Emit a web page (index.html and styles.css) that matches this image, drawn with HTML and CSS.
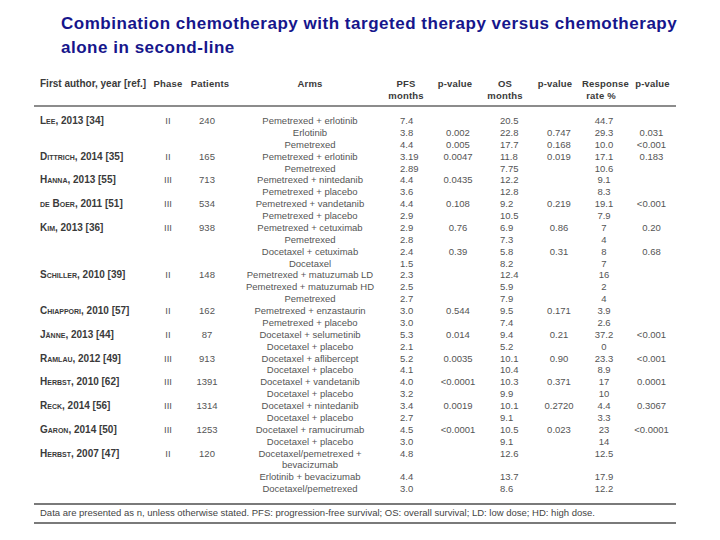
FILE: index.html
```html
<!DOCTYPE html>
<html lang="en">
<head>
<meta charset="utf-8">
<title>Combination chemotherapy with targeted therapy versus chemotherapy alone in second-line</title>
<link rel="stylesheet" href="styles.css">
</head>
<body>
<h1 class="title">Combination chemotherapy with targeted therapy versus chemotherapy<br>alone in second-line</h1>
<table class="trials">
  <colgroup>
    <col class="c-author"><col class="c-phase"><col class="c-pat"><col class="c-arms"><col class="c-pfs"><col class="c-p1"><col class="c-os"><col class="c-p2"><col class="c-rr"><col class="c-p3">
  </colgroup>
  <thead>
    <tr>
      <th class="author">First author, year [ref.]</th>
      <th>Phase</th>
      <th>Patients</th>
      <th>Arms</th>
      <th>PFS<br>months</th>
      <th>p-value</th>
      <th>OS<br>months</th>
      <th>p-value</th>
      <th class="rr-h">Response<br>rate %</th>
      <th class="p3-h">p-value</th>
    </tr>
  </thead>
  <tbody>
    <tr class="first"><td class="author"><span class="sc">Lee</span>, 2013 [34]</td><td class="ph">II</td><td class="pt">240</td><td class="arm">Pemetrexed + erlotinib</td><td class="pfs">7.4</td><td class="pv"></td><td class="os">20.5</td><td class="pv2"></td><td class="rr">44.7</td><td class="pv3"></td></tr>
    <tr><td></td><td></td><td></td><td class="arm">Erlotinib</td><td class="pfs">3.8</td><td class="pv">0.002</td><td class="os">22.8</td><td class="pv2">0.747</td><td class="rr">29.3</td><td class="pv3">0.031</td></tr>
    <tr><td></td><td></td><td></td><td class="arm">Pemetrexed</td><td class="pfs">4.4</td><td class="pv">0.005</td><td class="os">17.7</td><td class="pv2">0.168</td><td class="rr">10.0</td><td class="pv3">&lt;0.001</td></tr>
    <tr><td class="author"><span class="sc">Dittrich</span>, 2014 [35]</td><td class="ph">II</td><td class="pt">165</td><td class="arm">Pemetrexed + erlotinib</td><td class="pfs">3.19</td><td class="pv">0.0047</td><td class="os">11.8</td><td class="pv2">0.019</td><td class="rr">17.1</td><td class="pv3">0.183</td></tr>
    <tr><td></td><td></td><td></td><td class="arm">Pemetrexed</td><td class="pfs">2.89</td><td class="pv"></td><td class="os">7.75</td><td class="pv2"></td><td class="rr">10.6</td><td class="pv3"></td></tr>
    <tr><td class="author"><span class="sc">Hanna</span>, 2013 [55]</td><td class="ph">III</td><td class="pt">713</td><td class="arm">Pemetrexed + nintedanib</td><td class="pfs">4.4</td><td class="pv">0.0435</td><td class="os">12.2</td><td class="pv2"></td><td class="rr">9.1</td><td class="pv3"></td></tr>
    <tr><td></td><td></td><td></td><td class="arm">Pemetrexed + placebo</td><td class="pfs">3.6</td><td class="pv"></td><td class="os">12.8</td><td class="pv2"></td><td class="rr">8.3</td><td class="pv3"></td></tr>
    <tr><td class="author"><span class="sc">de Boer</span>, 2011 [51]</td><td class="ph">III</td><td class="pt">534</td><td class="arm">Pemetrexed + vandetanib</td><td class="pfs">4.4</td><td class="pv">0.108</td><td class="os">9.2</td><td class="pv2">0.219</td><td class="rr">19.1</td><td class="pv3">&lt;0.001</td></tr>
    <tr><td></td><td></td><td></td><td class="arm">Pemetrexed + placebo</td><td class="pfs">2.9</td><td class="pv"></td><td class="os">10.5</td><td class="pv2"></td><td class="rr">7.9</td><td class="pv3"></td></tr>
    <tr><td class="author"><span class="sc">Kim</span>, 2013 [36]</td><td class="ph">III</td><td class="pt">938</td><td class="arm">Pemetrexed + cetuximab</td><td class="pfs">2.9</td><td class="pv">0.76</td><td class="os">6.9</td><td class="pv2">0.86</td><td class="rr">7</td><td class="pv3">0.20</td></tr>
    <tr><td></td><td></td><td></td><td class="arm">Pemetrexed</td><td class="pfs">2.8</td><td class="pv"></td><td class="os">7.3</td><td class="pv2"></td><td class="rr">4</td><td class="pv3"></td></tr>
    <tr><td></td><td></td><td></td><td class="arm">Docetaxel + cetuximab</td><td class="pfs">2.4</td><td class="pv">0.39</td><td class="os">5.8</td><td class="pv2">0.31</td><td class="rr">8</td><td class="pv3">0.68</td></tr>
    <tr><td></td><td></td><td></td><td class="arm">Docetaxel</td><td class="pfs">1.5</td><td class="pv"></td><td class="os">8.2</td><td class="pv2"></td><td class="rr">7</td><td class="pv3"></td></tr>
    <tr><td class="author"><span class="sc">Schiller</span>, 2010 [39]</td><td class="ph">II</td><td class="pt">148</td><td class="arm">Pemetrexed + matuzumab LD</td><td class="pfs">2.3</td><td class="pv"></td><td class="os">12.4</td><td class="pv2"></td><td class="rr">16</td><td class="pv3"></td></tr>
    <tr><td></td><td></td><td></td><td class="arm">Pemetrexed + matuzumab HD</td><td class="pfs">2.5</td><td class="pv"></td><td class="os">5.9</td><td class="pv2"></td><td class="rr">2</td><td class="pv3"></td></tr>
    <tr><td></td><td></td><td></td><td class="arm">Pemetrexed</td><td class="pfs">2.7</td><td class="pv"></td><td class="os">7.9</td><td class="pv2"></td><td class="rr">4</td><td class="pv3"></td></tr>
    <tr><td class="author"><span class="sc">Chiappori</span>, 2010 [57]</td><td class="ph">II</td><td class="pt">162</td><td class="arm">Pemetrexed + enzastaurin</td><td class="pfs">3.0</td><td class="pv">0.544</td><td class="os">9.5</td><td class="pv2">0.171</td><td class="rr">3.9</td><td class="pv3"></td></tr>
    <tr><td></td><td></td><td></td><td class="arm">Pemetrexed + placebo</td><td class="pfs">3.0</td><td class="pv"></td><td class="os">7.4</td><td class="pv2"></td><td class="rr">2.6</td><td class="pv3"></td></tr>
    <tr><td class="author"><span class="sc">Jänne</span>, 2013 [44]</td><td class="ph">II</td><td class="pt">87</td><td class="arm">Docetaxel + selumetinib</td><td class="pfs">5.3</td><td class="pv">0.014</td><td class="os">9.4</td><td class="pv2">0.21</td><td class="rr">37.2</td><td class="pv3">&lt;0.001</td></tr>
    <tr><td></td><td></td><td></td><td class="arm">Docetaxel + placebo</td><td class="pfs">2.1</td><td class="pv"></td><td class="os">5.2</td><td class="pv2"></td><td class="rr">0</td><td class="pv3"></td></tr>
    <tr><td class="author"><span class="sc">Ramlau</span>, 2012 [49]</td><td class="ph">III</td><td class="pt">913</td><td class="arm">Docetaxel + aflibercept</td><td class="pfs">5.2</td><td class="pv">0.0035</td><td class="os">10.1</td><td class="pv2">0.90</td><td class="rr">23.3</td><td class="pv3">&lt;0.001</td></tr>
    <tr><td></td><td></td><td></td><td class="arm">Docetaxel + placebo</td><td class="pfs">4.1</td><td class="pv"></td><td class="os">10.4</td><td class="pv2"></td><td class="rr">8.9</td><td class="pv3"></td></tr>
    <tr><td class="author"><span class="sc">Herbst</span>, 2010 [62]</td><td class="ph">III</td><td class="pt">1391</td><td class="arm">Docetaxel + vandetanib</td><td class="pfs">4.0</td><td class="pv">&lt;0.0001</td><td class="os">10.3</td><td class="pv2">0.371</td><td class="rr">17</td><td class="pv3">0.0001</td></tr>
    <tr><td></td><td></td><td></td><td class="arm">Docetaxel + placebo</td><td class="pfs">3.2</td><td class="pv"></td><td class="os">9.9</td><td class="pv2"></td><td class="rr">10</td><td class="pv3"></td></tr>
    <tr><td class="author"><span class="sc">Reck</span>, 2014 [56]</td><td class="ph">III</td><td class="pt">1314</td><td class="arm">Docetaxel + nintedanib</td><td class="pfs">3.4</td><td class="pv">0.0019</td><td class="os">10.1</td><td class="pv2">0.2720</td><td class="rr">4.4</td><td class="pv3">0.3067</td></tr>
    <tr><td></td><td></td><td></td><td class="arm">Docetaxel + placebo</td><td class="pfs">2.7</td><td class="pv"></td><td class="os">9.1</td><td class="pv2"></td><td class="rr">3.3</td><td class="pv3"></td></tr>
    <tr><td class="author"><span class="sc">Garon</span>, 2014 [50]</td><td class="ph">III</td><td class="pt">1253</td><td class="arm">Docetaxel + ramucirumab</td><td class="pfs">4.5</td><td class="pv">&lt;0.0001</td><td class="os">10.5</td><td class="pv2">0.023</td><td class="rr">23</td><td class="pv3">&lt;0.0001</td></tr>
    <tr><td></td><td></td><td></td><td class="arm">Docetaxel + placebo</td><td class="pfs">3.0</td><td class="pv"></td><td class="os">9.1</td><td class="pv2"></td><td class="rr">14</td><td class="pv3"></td></tr>
    <tr><td class="author"><span class="sc">Herbst</span>, 2007 [47]</td><td class="ph">II</td><td class="pt">120</td><td class="arm">Docetaxel/pemetrexed +</td><td class="pfs">4.8</td><td class="pv"></td><td class="os">12.6</td><td class="pv2"></td><td class="rr">12.5</td><td class="pv3"></td></tr>
    <tr><td></td><td></td><td></td><td class="arm">bevacizumab</td><td class="pfs"></td><td class="pv"></td><td class="os"></td><td class="pv2"></td><td class="rr"></td><td class="pv3"></td></tr>
    <tr><td></td><td></td><td></td><td class="arm">Erlotinib + bevacizumab</td><td class="pfs">4.4</td><td class="pv"></td><td class="os">13.7</td><td class="pv2"></td><td class="rr">17.9</td><td class="pv3"></td></tr>
    <tr class="last"><td></td><td></td><td></td><td class="arm">Docetaxel/pemetrexed</td><td class="pfs">3.0</td><td class="pv"></td><td class="os">8.6</td><td class="pv2"></td><td class="rr">12.2</td><td class="pv3"></td></tr>
  </tbody>
  <tfoot>
    <tr><td class="note" colspan="10">Data are presented as n, unless otherwise stated. PFS: progression-free survival; OS: overall survival; LD: low dose; HD: high dose.</td></tr>
  </tfoot>
</table>
</body>
</html>
```
FILE: styles.css
```css
html, body {
  margin: 0;
  padding: 0;
  background: #ffffff;
}

.title {
  margin: 0;
  padding: 12px 0 0 61px;
  font-family: "Liberation Sans", Arial, sans-serif;
  font-weight: bold;
  font-size: 17px;
  letter-spacing: 0.52px;
  line-height: 24px;
  color: #16168c;
}

.trials {
  margin: 18px 0 0 34px;
  width: 642px;
  table-layout: fixed;
  border-collapse: collapse;
  font-family: "Liberation Sans", Arial, sans-serif;
  font-size: 9.5px;
  line-height: 11.87px;
  color: #555555;
}

.c-author { width: 118px; }
.c-phase { width: 32px; }
.c-pat { width: 52px; }
.c-arms { width: 148px; }
.c-pfs { width: 44px; }
.c-p1 { width: 54px; }
.c-os { width: 46px; }
.c-p2 { width: 54px; }
.c-rr { width: 40px; }
.c-p3 { width: 54px; }

.trials th {
  padding: 0 0 3px 0;
  vertical-align: top;
  text-align: center;
  font-size: 9.5px;
  letter-spacing: 0.2px;
  font-weight: bold;
  line-height: 12px;
  color: #3a3a3a;
  border-bottom: 2px solid #8c8c8c;
  white-space: nowrap;
}

.trials th.author {
  font-size: 10px;
  letter-spacing: 0;
}

.trials th.rr-h {
  padding-right: 2px;
}

.trials th.p3-h {
  padding-left: 7px;
}

.trials td {
  padding: 0;
  white-space: nowrap;
  text-align: center;
}

.trials th.author,
.trials td.author {
  text-align: left;
  padding-left: 6px;
}

.trials td.author {
  font-size: 10px;
  font-weight: bold;
  color: #3a3a3a;
}

.sc {
  font-variant: small-caps;
}

.trials tr.first td {
  padding-top: 8px;
}

.trials tr.last td {
  padding-bottom: 8px;
}

.trials td.pt {
  padding-right: 6px;
}

.trials td.pfs {
  text-align: left;
  padding-left: 16px;
}

.trials td.pv {
  padding-left: 6px;
}

.trials td.os {
  text-align: left;
  padding-left: 18px;
}

.trials td.pv2 {
  padding-left: 8px;
}

.trials td.rr {
  padding-left: 4px;
}

.trials td.pv3 {
  padding-left: 5px;
}

.trials tfoot td.note {
  text-align: left;
  padding: 2px 0 3px 6px;
  line-height: 12px;
  color: #444444;
  border-top: 2px solid #7a7a7a;
  border-bottom: 2px solid #7a7a7a;
}
```
